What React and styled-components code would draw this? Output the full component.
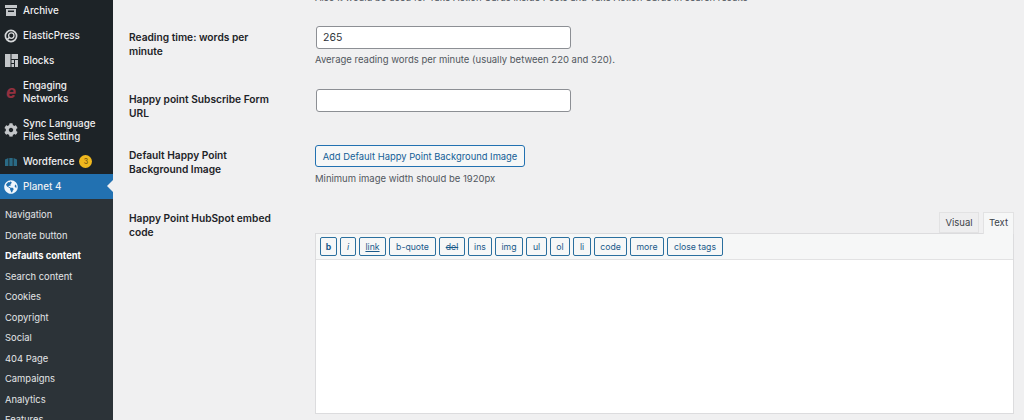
import styled, { createGlobalStyle } from "styled-components";
import { FaCog, FaGlobeAmericas } from "react-icons/fa";

const GlobalStyle = createGlobalStyle`
    html, body {
        margin: 0;
        padding: 0;
        height: 420px;
        overflow: hidden;
        background: #f0f0f1;
        font-family: "Inter", "Liberation Sans", sans-serif;
    }
`;

const Page = styled.div`
    width: 1024px;
    height: 420px;
    display: flex;
    overflow: hidden;
`;

const Sidebar = styled.nav`
    width: 113px;
    flex-shrink: 0;
    height: 420px;
    overflow: hidden;
    background: #1d2327;
    color: #f0f0f1;
`;

const Menu = styled.div`
    margin-top: -2px;
    display: flex;
    flex-direction: column;
`;

const MenuItem = styled.div`
    position: relative;
    display: flex;
    align-items: center;
    gap: 5px;
    min-height: 25px;
    padding: ${({ $tall }) => ($tall ? "6px 0 6px 4px" : "0 0 0 4px")};
    box-sizing: border-box;
    background: ${({ $active }) => ($active ? "#2271b1" : "transparent")};
    color: #f0f0f1;
    font-size: 9.8px;
    line-height: 13px;
    font-weight: 500;
`;

const MenuIcon = styled.span`
    width: 14px;
    height: 14px;
    flex-shrink: 0;
    display: flex;
    align-items: center;
    justify-content: center;
    color: ${({ $color }) => $color || "#c3c6c9"};
`;

const EngagingMark = styled.span`
    font-family: "Liberation Sans", sans-serif;
    font-style: italic;
    font-weight: 700;
    font-size: 18px;
    line-height: 14px;
    color: #93303f;
`;

const Badge = styled.span`
    width: 13px;
    height: 13px;
    border-radius: 50%;
    background: #f0b81e;
    color: #7a5a10;
    font-size: 7px;
    line-height: 13px;
    text-align: center;
`;

const ActiveArrow = styled.span`
    position: absolute;
    right: 0;
    top: 6px;
    border: 6px solid transparent;
    border-left: 0;
    border-right-color: #f0f0f1;
`;

const SubMenu = styled.div`
    display: flex;
    flex-direction: column;
    padding-top: 6px;
    background: #2c3338;
`;

const SubItem = styled.div`
    height: 20.5px;
    padding-left: 5px;
    font-size: 9.4px;
    line-height: 20.5px;
    font-weight: ${({ $current }) => ($current ? 700 : 400)};
    color: ${({ $current }) => ($current ? "#fff" : "#e3e5e7")};
    white-space: nowrap;
`;

const Content = styled.main`
    flex: 1;
    min-width: 0;
    padding: 0 10px 0 16px;
    color: #1d2327;
`;

const ClippedNote = styled.p`
    margin: -8px 0 0 186px;
    font-size: 9.5px;
    line-height: 12px;
    color: #50575e;
    white-space: nowrap;
`;

const Row = styled.div`
    display: grid;
    grid-template-columns: 186px 1fr;
    margin-top: ${({ $gap }) => $gap}px;
`;

const Label = styled.label`
    margin-top: -1px;
    padding-top: ${({ $top }) => $top || 0}px;
    width: 146px;
    font-size: 10.2px;
    line-height: 14px;
    font-weight: 600;
    color: #1d2327;
`;

const Input = styled.input`
    display: block;
    width: 255px;
    height: 23px;
    margin-left: 1px;
    padding: 0 6px;
    box-sizing: border-box;
    border: 1px solid #8c8f94;
    border-radius: 3px;
    background: #fff;
    color: #2c3338;
    font: 400 10.5px "Inter", "Liberation Sans", sans-serif;
`;

const Hint = styled.p`
    margin: ${({ $gap }) => $gap}px 0 0;
    font-size: 9.5px;
    line-height: 12px;
    color: #50575e;
`;

const MediaButton = styled.button`
    display: block;
    width: 210px;
    height: 22px;
    padding: 0;
    border: 1px solid #2271b1;
    border-radius: 3px;
    background: #f6f7f7;
    color: #135e96;
    font: 400 9.4px "Inter", "Liberation Sans", sans-serif;
    white-space: nowrap;
`;

const EditorTabs = styled.div`
    display: flex;
    justify-content: flex-end;
    gap: 4px;
    height: 21px;
    position: relative;
    z-index: 1;
`;

const Tab = styled.div`
    width: ${({ $w }) => $w}px;
    height: ${({ $active }) => ($active ? 22 : 21)}px;
    box-sizing: border-box;
    border: 1px solid #e2e2e3;
    border-bottom: ${({ $active }) => ($active ? "0" : "1px solid #e2e2e3")};
    background: ${({ $active }) => ($active ? "#f6f7f7" : "#eeeeef")};
    color: #3c434a;
    font-size: 9.5px;
    line-height: 20px;
    text-align: center;
`;

const Editor = styled.div`
    width: 699px;
    border: 1px solid #dcdcde;
    box-sizing: border-box;
`;

const Toolbar = styled.div`
    display: flex;
    gap: 3px;
    height: 26px;
    padding: 3px 4px;
    box-sizing: border-box;
    background: #f6f7f7;
    border-bottom: 1px solid #e2e2e3;
`;

const QuickTag = styled.button`
    height: 19px;
    width: ${({ $w }) => $w}px;
    padding: 0;
    border: 1px solid #2a6f9e;
    border-radius: 2px;
    background: #f6f7f7;
    color: #1a5a8a;
    font-family: "Inter", "Liberation Sans", sans-serif;
    font-size: 8.7px;
    font-weight: ${({ $bold }) => ($bold ? 700 : 400)};
    font-style: ${({ $italic }) => ($italic ? "italic" : "normal")};
    text-decoration: ${({ $deco }) => $deco || "none"};
`;

const TextArea = styled.div`
    height: 153px;
    background: #fff;
`;

const ArchiveIcon = () => (
    <svg width="14" height="13" viewBox="0 0 14 13" fill="#c3c6c9">
        <path d="M1 1h12v3H1z" />
        <path d="M2 5h10v7H2zM4 6.5v1.5h6V6.5z" fillRule="evenodd" />
    </svg>
);

const ElasticIcon = () => (
    <svg width="14" height="14" viewBox="0 0 14 14" fill="none" stroke="#d5d7d9">
        <circle cx="7" cy="7" r="5.6" strokeWidth="1.7" />
        <circle cx="7.3" cy="6.6" r="2.7" strokeWidth="1.3" />
        <path d="M3.4 10.4 5.3 8.5" strokeWidth="1.6" />
    </svg>
);

const BlocksIcon = () => (
    <svg width="13" height="13" viewBox="0 0 13 13" fill="#c3c6c9">
        <path d="M0 0h5.5v13H0zM6.5 0H13v5H6.5zM6.5 6H9v3H6.5zM10 6h3v7h-3zM6.5 10H9v3H6.5z" />
    </svg>
);

const WordfenceIcon = () => (
    <svg width="12" height="8" viewBox="0 0 12 8" fill="#2a6a85">
        <path d="M0 1.5 3.4 0v8H0zM4.3 0h3.4v8H4.3zM8.6 0 12 1.5V8H8.6z" />
    </svg>
);

const subItems = [
    "Navigation",
    "Donate button",
    "Defaults content",
    "Search content",
    "Cookies",
    "Copyright",
    "Social",
    "404 Page",
    "Campaigns",
    "Analytics",
    "Features",
];

const tags = [
    { name: "b", w: 17, bold: true },
    { name: "i", w: 16, italic: true },
    { name: "link", w: 27, deco: "underline" },
    { name: "b-quote", w: 47 },
    { name: "del", w: 26, deco: "line-through" },
    { name: "ins", w: 24 },
    { name: "img", w: 28 },
    { name: "ul", w: 21 },
    { name: "ol", w: 20 },
    { name: "li", w: 18 },
    { name: "code", w: 33 },
    { name: "more", w: 34 },
    { name: "close tags", w: 56 },
];

function App() {
    return (
        <>
            <GlobalStyle />
            <Page>
                <Sidebar>
                    <Menu>
                        <MenuItem>
                            <MenuIcon><ArchiveIcon /></MenuIcon>Archive
                        </MenuItem>
                        <MenuItem>
                            <MenuIcon><ElasticIcon /></MenuIcon>ElasticPress
                        </MenuItem>
                        <MenuItem>
                            <MenuIcon><BlocksIcon /></MenuIcon>Blocks
                        </MenuItem>
                        <MenuItem $tall>
                            <MenuIcon><EngagingMark>e</EngagingMark></MenuIcon>
                            <span>Engaging<br />Networks</span>
                        </MenuItem>
                        <MenuItem $tall>
                            <MenuIcon><FaCog size={14} /></MenuIcon>
                            <span>Sync Language<br />Files Setting</span>
                        </MenuItem>
                        <MenuItem>
                            <MenuIcon><WordfenceIcon /></MenuIcon>Wordfence<Badge>3</Badge>
                        </MenuItem>
                        <MenuItem $active>
                            <MenuIcon $color="#f0f6fc"><FaGlobeAmericas size={14} /></MenuIcon>Planet 4
                            <ActiveArrow />
                        </MenuItem>
                    </Menu>
                    <SubMenu>
                        {subItems.map((item) => (
                            <SubItem key={item} $current={item === "Defaults content"}>
                                {item}
                            </SubItem>
                        ))}
                    </SubMenu>
                </Sidebar>
                <Content>
                    <ClippedNote>
                        Also it would be used for Take Action Cards inside Posts and Take Action Cards in search results
                    </ClippedNote>
                    <Row $gap={22}>
                        <Label $top={5}>Reading time: words per minute</Label>
                        <div>
                            <Input defaultValue="265" />
                            <Hint $gap={5}>Average reading words per minute (usually between 220 and 320).</Hint>
                        </div>
                    </Row>
                    <Row $gap={23}>
                        <Label $top={4}>Happy point Subscribe Form URL</Label>
                        <Input />
                    </Row>
                    <Row $gap={25}>
                        <Label $top={4}>Default Happy Point Background Image</Label>
                        <div>
                            <MediaButton>Add Default Happy Point Background Image</MediaButton>
                            <Hint $gap={6}>Minimum image width should be 1920px</Hint>
                        </div>
                    </Row>
                    <Row $gap={27}>
                        <Label>Happy Point HubSpot embed code</Label>
                        <div>
                            <EditorTabs>
                                <Tab $w={40}>Visual</Tab>
                                <Tab $w={31} $active>Text</Tab>
                            </EditorTabs>
                            <Editor>
                                <Toolbar>
                                    {tags.map((tag) => (
                                        <QuickTag
                                            key={tag.name}
                                            $w={tag.w}
                                            $bold={tag.bold}
                                            $italic={tag.italic}
                                            $deco={tag.deco}
                                        >
                                            {tag.name}
                                        </QuickTag>
                                    ))}
                                </Toolbar>
                                <TextArea />
                            </Editor>
                        </div>
                    </Row>
                </Content>
            </Page>
        </>
    );
}

export default App;
